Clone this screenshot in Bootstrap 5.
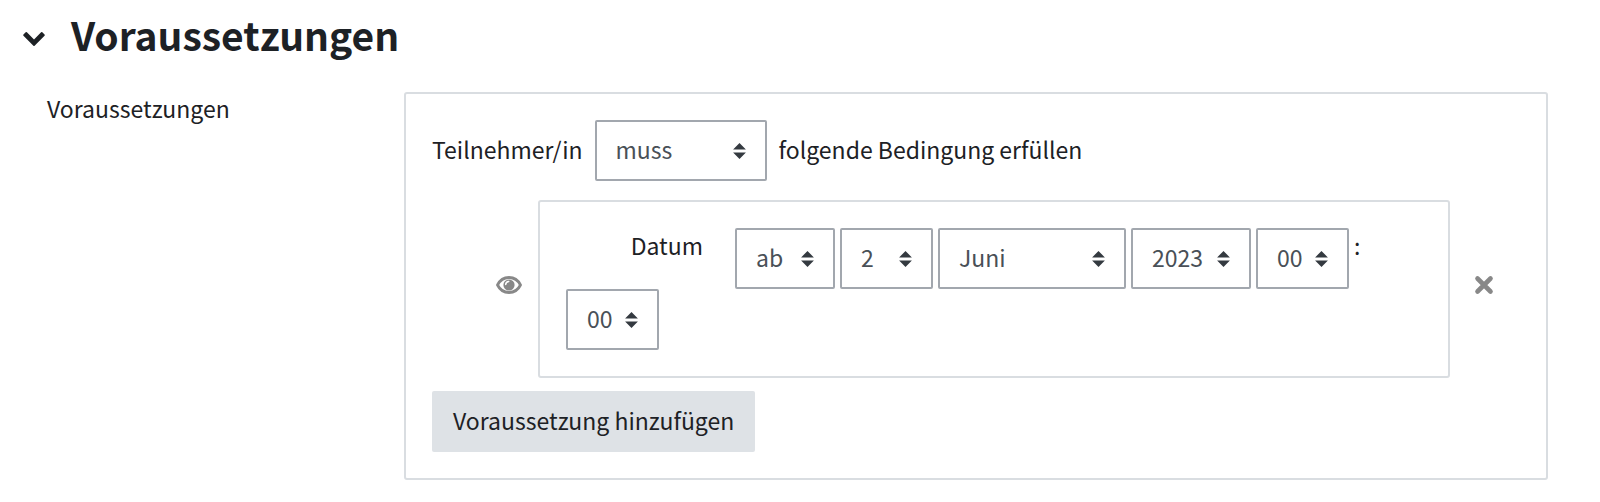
<!DOCTYPE html>
<html lang="de">
<head>
<meta charset="utf-8">
<meta name="viewport" content="width=device-width, initial-scale=1">
<title>Voraussetzungen</title>
<link href="https://cdn.jsdelivr.net/npm/bootstrap@5.3.0/dist/css/bootstrap.min.css" rel="stylesheet">
<style>
  body { font-family: "Noto Sans CJK SC", "Open Sans", sans-serif; font-size: 23px; line-height: 32px; color: #1d2125; background: #fff; }
  .section-head { gap: 25px; padding: 8px 22px 2px; }
  .section-head h2 { font-size: 39px; line-height: 52px; font-weight: 700; }
  .toggle-btn, .icon-btn { border: 0; background: none; padding: 0; display: flex; color: #1d2125; }
  .toggle-btn { padding-top: 10px; }
  .toggle-btn svg { width: 24px; height: 24px; }
  .icon-btn { color: #888; padding-bottom: 9px; }
  .icon-btn svg { width: 28px; height: 28px; fill: currentColor; }
  .form-line { padding: 30px 52px 0 47px; }
  .field-name { flex: 0 0 357px; }
  .rule-box { border: 2px solid #d9dde1; border-radius: 3px; padding: 26px; }
  .rule-main { gap: 19px; }
  .sentence { gap: 12px; }
  .sentence label, .sentence span { padding-bottom: 4px; }
  .rule-row { padding: 0 22px 0 63px; gap: 15px; }
  .rule-row .rule-box { margin-right: 5px; }
  .date-fields { column-gap: 5px; line-height: 35px; }
  .date-name { width: 164px; padding-right: 27px; text-align: right; }
  .form-select.pick {
    width: auto; height: 61px; padding: 0 40px 4px 19px; font-size: 23px; line-height: 36px; color: #495057;
    border: 2px solid #a2a7ae; border-radius: 2px;
    background-image: url("data:image/svg+xml,%3csvg xmlns='http://www.w3.org/2000/svg' viewBox='0 0 4 5'%3e%3cpath fill='%23343a40' d='M2 0L0 2h4zm0 5L0 3h4z'/%3e%3c/svg%3e");
    background-position: right 19px center; background-size: 13px 16px;
  }
  .form-select.pick.w-verb { width: 172px; }
  .form-select.pick.w-dir { width: 100px; }
  .form-select.pick.w-two { width: 93px; padding-right: 30px; }
  .form-select.pick.w-month { width: 188px; }
  .form-select.pick.w-year { width: 120px; padding-right: 30px; }
  .btn-add { align-self: flex-start; height: 61px; padding: 0 21px 4px; font-size: 23px; line-height: 36px; border: 0; border-radius: 2px; background: #dee2e6; color: #1d2125; margin-top: -6px; }
</style>
</head>
<body>
<main>
  <div class="section-head d-flex align-items-center">
    <button class="toggle-btn" type="button" data-bs-toggle="collapse" data-bs-target="#conditions" aria-expanded="true" aria-controls="conditions" aria-label="Voraussetzungen einklappen">
      <svg viewBox="90 154 1612 1792" fill="currentColor" aria-hidden="true"><path d="M1683 808l-742 741q-19 19-45 19t-45-19l-742-741q-19-19-19-45.500t19-45.500l166-165q19-19 45-19t45 19l531 531 531-531q19-19 45-19t45 19l166 165q19 19 19 45.500t-19 45.500z"/></svg>
    </button>
    <h2 class="m-0">Voraussetzungen</h2>
  </div>

  <form id="conditions" class="collapse show">
    <div class="form-line d-flex align-items-start">
      <div class="field-name" id="field-name">Voraussetzungen</div>
      <div class="rule-box rule-main flex-grow-1 d-flex flex-column" role="group" aria-labelledby="field-name">
        <div class="sentence d-flex align-items-center">
          <label for="verb">Teilnehmer/in</label>
          <select id="verb" class="form-select pick w-verb"><option>muss</option><option>darf nicht</option></select>
          <span>folgende Bedingung erfüllen</span>
        </div>

        <div class="rule-row d-flex align-items-center">
          <button class="icon-btn" type="button" aria-label="Anzeigen">
            <svg viewBox="0 0 28 28" aria-hidden="true">
              <path d="M2.500 14C5 9 9.500 6.500 14 6.500S23 9 25.500 14C23 19 18.500 21.500 14 21.500S5 19 2.500 14z" fill="none" stroke="currentColor" stroke-width="2.800" stroke-linejoin="round"/>
              <circle cx="14" cy="14" r="5.600"/>
              <path d="M10.700 13.600a3.300 3.300 0 0 1 3-3.200" fill="none" stroke="#fff" stroke-width="1.500" stroke-linecap="round"/>
            </svg>
          </button>
          <div class="rule-box flex-grow-1">
            <div class="date-fields d-flex flex-wrap align-items-start">
              <label class="date-name" for="dir">Datum</label>
              <select id="dir" class="form-select pick w-dir"><option>ab</option><option>bis</option></select>
              <select class="form-select pick w-two" aria-label="Tag"><option>2</option></select>
              <select class="form-select pick w-month" aria-label="Monat"><option>Juni</option></select>
              <select class="form-select pick w-year" aria-label="Jahr"><option>2023</option></select>
              <select class="form-select pick w-two" aria-label="Stunde"><option>00</option></select>
              <span>:</span>
              <select class="form-select pick w-two" aria-label="Minute"><option>00</option></select>
            </div>
          </div>
          <button class="icon-btn" type="button" aria-label="Löschen">
            <svg viewBox="0 0 28 28" aria-hidden="true"><path d="M7.500 7.500l13 13M20.500 7.500l-13 13" fill="none" stroke="currentColor" stroke-width="4.600" stroke-linecap="round"/></svg>
          </button>
        </div>

        <button class="btn btn-add" type="button">Voraussetzung hinzufügen</button>
      </div>
    </div>
  </form>
</main>
<script src="https://cdn.jsdelivr.net/npm/bootstrap@5.3.0/dist/js/bootstrap.bundle.min.js"></script>
</body>
</html>
